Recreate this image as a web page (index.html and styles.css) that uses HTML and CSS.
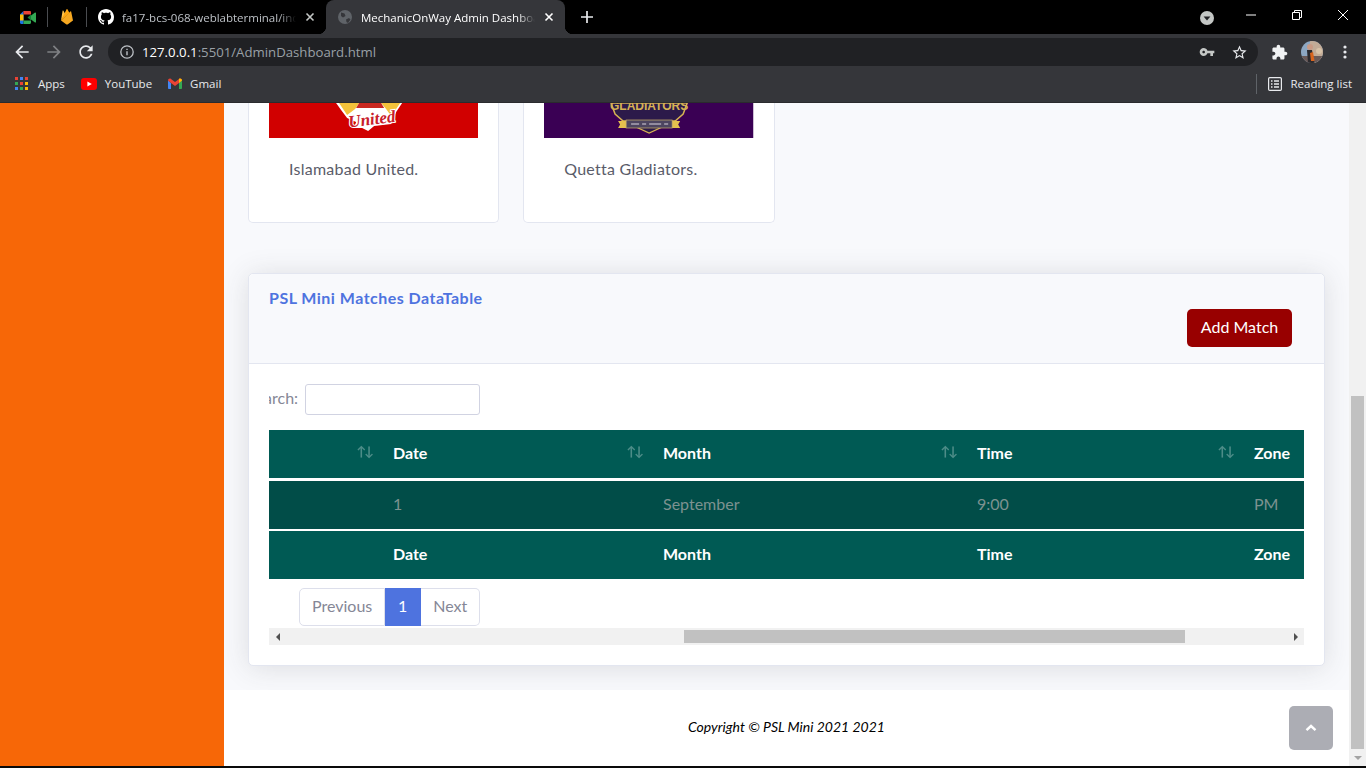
FILE: index.html
```html
<!DOCTYPE html>
<html lang="en">
<head>
    <meta charset="UTF-8">
    <meta name="viewport" content="width=device-width, initial-scale=1.0">
    <title>MechanicOnWay Admin Dashboard</title>
    <link rel="stylesheet" href="styles.css">
</head>
<body>
<div class="browser">

    <!-- tabs -->
    <div class="tabstrip">
        <span class="pinned">
            <svg width="16" height="13" viewBox="0 0 16 13">
                <path d="M0 3.500 3.500 0v13H1.200C.5 13 0 12.500 0 11.800z" fill="#1a73e8"/>
                <path d="M3.500 0h6.300c.7 0 1.200.5 1.200 1.200v2.300H3.500z" fill="#ea4335"/>
                <path d="M3.500 9.500H11v2.300c0 .7-.5 1.200-1.200 1.200H3.500z" fill="#34a853"/>
                <path d="M0 3.500h3.500v6H0z" fill="#fbbc04"/>
                <path d="M7.500 6.500 11 3.500v6z" fill="#188038"/>
                <path d="M11 4.600 15 1.600c.4-.3 1-.1 1 .5v8.800c0 .6-.6.8-1 .5l-4-3z" fill="#34a853"/>
            </svg>
        </span>
        <span class="tab-sep"></span>
        <span class="pinned">
            <svg width="12" height="16" viewBox="0 0 12 16">
                <path d="M0 11.500 1.600 1.800c.1-.4.6-.5.8-.1L4.200 5z" fill="#ffc24a"/>
                <path d="M0 11.500 5.600.3c.2-.4.6-.4.8 0L8.500 4z" fill="#ffa712"/>
                <path d="M0 11.500 9.400 2.500c.3-.3.7-.1.8.3L12 11.500 6.900 15.200c-.5.3-1.300.3-1.800 0z" fill="#f6a821"/>
            </svg>
        </span>
        <span class="tab-sep"></span>
        <div class="tab">
            <svg class="tab-icon" width="16" height="16" viewBox="0 0 16 16"><path fill="#fff" d="M8 0C3.580 0 0 3.580 0 8c0 3.540 2.290 6.530 5.470 7.590.4.07.55-.17.55-.38 0-.19-.01-.82-.01-1.490-2.010.37-2.530-.49-2.690-.94-.09-.23-.48-.94-.82-1.130-.28-.15-.68-.52-.01-.53.63-.01 1.080.58 1.230.82.72 1.210 1.870.87 2.330.66.07-.52.28-.87.51-1.070-1.780-.2-3.640-.89-3.640-3.950 0-.87.31-1.590.82-2.150-.08-.2-.36-1.020.08-2.120 0 0 .67-.21 2.200.82.64-.18 1.320-.27 2-.27.68 0 1.360.09 2 .27 1.530-1.040 2.200-.82 2.200-.82.44 1.100.16 1.920.08 2.120.51.56.82 1.270.82 2.150 0 3.070-1.870 3.750-3.650 3.950.29.25.54.73.54 1.480 0 1.070-.01 1.930-.01 2.200 0 .21.15.46.55.38A8.013 8.013 0 0016 8c0-4.420-3.580-8-8-8z"/></svg>
            <span class="tab-title">fa17-bcs-068-weblabterminal/index.html</span>
            <svg class="tab-close" width="10" height="10" viewBox="0 0 10 10"><path d="M1.500 1.500l7 7m0-7l-7 7" stroke="#c4c7c5" stroke-width="1.600"/></svg>
        </div>
        <div class="tab tab-active">
            <svg class="tab-icon" width="14" height="14" viewBox="0 0 14 14">
                <circle cx="7" cy="7" r="7" fill="#5f6368"/>
                <path d="M3 2.500 6.500 3.500 7.500 6 5 7.500 3 6zM8 9.500l3-1.500 1.500 1.500L10 13 8.500 12z" fill="#35363a"/>
            </svg>
            <span class="tab-title">MechanicOnWay Admin Dashboard</span>
            <svg class="tab-close" width="10" height="10" viewBox="0 0 10 10"><path d="M1.500 1.500l7 7m0-7l-7 7" stroke="#fff" stroke-width="1.600"/></svg>
        </div>
        <svg class="new-tab" width="12" height="12" viewBox="0 0 12 12"><path d="M6 0v12M0 6h12" stroke="#e8eaed" stroke-width="1.700"/></svg>

        <svg class="tab-search" width="14" height="14" viewBox="0 0 14 14">
            <circle cx="7" cy="7" r="7" fill="#c4c7c5"/>
            <path d="M3.600 5.500h6.800L7 9.500z" fill="#202124"/>
        </svg>
        <div class="win-controls">
            <svg width="10" height="10" viewBox="0 0 10 10"><path d="M0 5h10" stroke="#fff"/></svg>
            <svg width="10" height="10" viewBox="0 0 10 10"><path d="M.5 2.500h7v7h-7zM2.500 2.500v-2h7v7h-2" fill="none" stroke="#fff"/></svg>
            <svg width="10" height="10" viewBox="0 0 10 10"><path d="M0 0l10 10M10 0L0 10" stroke="#fff"/></svg>
        </div>
    </div>

    <!-- address bar -->
    <div class="toolbar">
        <svg class="nav-btn" width="20" height="20" viewBox="0 0 24 24"><path fill="#e8eaed" d="M20 11H7.830l5.590-5.590L12 4l-8 8 8 8 1.410-1.410L7.830 13H20v-2z"/></svg>
        <svg class="nav-btn" width="20" height="20" viewBox="0 0 24 24"><path fill="#7f8184" d="M12 4l-1.410 1.410L16.170 11H4v2h12.170l-5.580 5.590L12 20l8-8z"/></svg>
        <svg class="nav-btn" width="20" height="20" viewBox="0 0 24 24"><path fill="#e8eaed" d="M17.650 6.350C16.200 4.900 14.210 4 12 4c-4.420 0-7.990 3.580-7.990 8s3.570 8 7.990 8c3.730 0 6.840-2.550 7.730-6h-2.080c-.82 2.330-3.040 4-5.650 4-3.310 0-6-2.690-6-6s2.690-6 6-6c1.660 0 3.140.69 4.220 1.780L13 11h7V4l-2.350 2.350z"/></svg>
        <div class="omnibox">
            <svg width="14" height="14" viewBox="0 0 14 14">
                <circle cx="7" cy="7" r="6.200" fill="none" stroke="#bdc1c6" stroke-width="1.300"/>
                <path d="M7 6.200v4M7 3.800v1.300" stroke="#bdc1c6" stroke-width="1.400"/>
            </svg>
            <span class="url"><b>127.0.0.1</b>:5501/AdminDashboard.html</span>
            <svg class="omni-key" width="16" height="16" viewBox="0 0 24 24"><path fill="#c4c7c5" d="M12.650 10C11.830 7.670 9.610 6 7 6c-3.310 0-6 2.690-6 6s2.690 6 6 6c2.610 0 4.830-1.670 5.650-4H17v4h4v-4h2v-4H12.650zM7 14c-1.100 0-2-.9-2-2s.9-2 2-2 2 .9 2 2-.9 2-2 2z"/></svg>
            <svg class="omni-star" width="17" height="17" viewBox="0 0 24 24"><path fill="#e8eaed" d="M22 9.240l-7.190-.62L12 2 9.190 8.630 2 9.240l5.460 4.730L5.820 21 12 17.270 18.180 21l-1.630-7.030L22 9.240zM12 15.400l-3.760 2.270 1-4.280-3.320-2.880 4.380-.38L12 6.100l1.710 4.040 4.380.38-3.320 2.880 1 4.280L12 15.400z"/></svg>
        </div>
        <svg class="ext-icon" width="17" height="17" viewBox="0 0 24 24"><path fill="#f1f3f4" d="M20.500 11H19V7c0-1.100-.9-2-2-2h-4V3.500C13 2.120 11.880 1 10.500 1S8 2.120 8 3.500V5H4c-1.100 0-1.990.9-1.990 2v3.800H3.500c1.490 0 2.700 1.210 2.700 2.700s-1.210 2.700-2.700 2.700H2V20c0 1.100.9 2 2 2h3.800v-1.500c0-1.490 1.210-2.700 2.700-2.700 1.490 0 2.700 1.210 2.700 2.700V22H17c1.100 0 2-.9 2-2v-4h1.500c1.380 0 2.500-1.120 2.500-2.500S21.880 11 20.500 11z"/></svg>
        <svg class="avatar" width="22" height="22" viewBox="0 0 22 22">
            <defs><clipPath id="avatar-clip"><circle cx="11" cy="11" r="11"/></clipPath></defs>
            <g clip-path="url(#avatar-clip)">
                <rect width="22" height="22" fill="#8da7c2"/>
                <rect x="9" width="13" height="22" fill="#c2ab96"/>
                <rect y="15" width="22" height="7" fill="#6a5a58"/>
                <circle cx="9" cy="6" r="3" fill="#c99a84"/>
                <path d="M6 9h5l2.500 13H7z" fill="#2b2a2e"/>
                <path d="M9 12l3-1 1.500 9H10z" fill="#d8641e"/>
                <circle cx="18" cy="10" r="3" fill="#d8c3a8"/>
            </g>
        </svg>
        <svg class="menu-dots" width="4" height="14" viewBox="0 0 4 14"><circle cx="2" cy="2" r="1.600" fill="#e8eaed"/><circle cx="2" cy="7" r="1.600" fill="#e8eaed"/><circle cx="2" cy="12" r="1.600" fill="#e8eaed"/></svg>
    </div>

    <!-- bookmarks -->
    <div class="bookmarks">
        <span class="bookmark">
            <svg width="13" height="13" viewBox="0 0 13 13">
                <rect width="3" height="3" fill="#ea4335"/><rect x="5" width="3" height="3" fill="#4285f4"/><rect x="10" width="3" height="3" fill="#ea4335"/>
                <rect y="5" width="3" height="3" fill="#34a853"/><rect x="5" y="5" width="3" height="3" fill="#ea4335"/><rect x="10" y="5" width="3" height="3" fill="#fbbc04"/>
                <rect y="10" width="3" height="3" fill="#4285f4"/><rect x="5" y="10" width="3" height="3" fill="#34a853"/><rect x="10" y="10" width="3" height="3" fill="#fbbc04"/>
            </svg>
            <span class="label-apps">Apps</span>
        </span>
        <span class="bookmark">
            <svg width="16" height="12" viewBox="0 0 16 12"><rect width="16" height="12" rx="3" fill="#f00"/><path d="M6.400 3.400v5.200L10.800 6z" fill="#fff"/></svg>
            YouTube
        </span>
        <span class="bookmark">
            <svg width="14" height="11" viewBox="0 0 14 11">
                <path d="M0 2.500v7.500c0 .5.400 1 1 1h2V5z" fill="#4285f4"/>
                <path d="M11 5v6h2c.6 0 1-.5 1-1V2.500z" fill="#34a853"/>
                <path d="M0 2.500C0 .8 1.800 0 3 .9L7 4l4-3.100c1.200-.9 3-.1 3 1.600L11 5 7 8 3 5z" fill="#ea4335"/>
                <path d="M11 .9C12.200 0 14 .8 14 2.500L11 5z" fill="#fbbc04"/>
            </svg>
            Gmail
        </span>
        <span class="bookmark-sep"></span>
        <span class="bookmark reading-list">
            <svg width="14" height="14" viewBox="0 0 14 14">
                <rect x=".6" y=".6" width="12.800" height="12.800" rx="1.200" fill="none" stroke="#e8eaed" stroke-width="1.200"/>
                <path d="M3 4h1.500M3 7h1.500M3 10h1.500M6 4h5M6 7h5M6 10h5" stroke="#e8eaed" stroke-width="1.300"/>
            </svg>
            Reading list
        </span>
    </div>

    <!-- page -->
    <div class="viewport">
        <aside class="sidebar"></aside>

        <main class="content">
            <div class="team-row">
                <div class="team-card">
                    <svg class="team-img" viewBox="0 0 209 35" preserveAspectRatio="none">
                        <rect width="209" height="35" fill="#d10000"/>
                        <path d="M67 0h66l-6 9-3 7-2 5-17 2-6 5-6-3-8 0 2-6-9-4-6-8z" fill="#fff"/>
                        <path d="M70 0h20l-4 6-8 6zM112 0h19l-6 9-3 4-5-7z" fill="#f3c23a"/>
                        <path d="M90 0h22l3 5H87z" fill="#c9281f"/>
                        <text x="79" y="22" class="logo-script" transform="rotate(-7 100 16)">United</text>
                    </svg>
                    <p class="team-name">Islamabad United.</p>
                </div>
                <div class="team-card">
                    <svg class="team-img" viewBox="0 0 209 35" preserveAspectRatio="none">
                        <rect width="209" height="35" fill="#3a0054"/>
                        <path d="M67 0h76l-4 11-8 7H79l-8-7z" fill="#2c1a4a" stroke="#d6b254" stroke-width="1.500"/>
                        <text x="105" y="7" class="logo-caps" text-anchor="middle">GLADIATORS</text>
                        <path d="M79 18l26 12 26-12" fill="#2c1a4a" stroke="#d6b254" stroke-width="1.200"/>
                        <path d="M74 18h9v7h-9l2-3.500zM136 18h-9v7h9l-2-3.500z" fill="#e5c04e"/>
                        <rect x="82" y="17" width="46" height="8" fill="#4d4560" stroke="#c9b06a" stroke-width=".7"/>
                        <path d="M87 21h8M98 21h4M105 21h12M120 21h4" stroke="#d9d4dd" stroke-width="1"/>
                    </svg>
                    <p class="team-name">Quetta Gladiators.</p>
                </div>
            </div>

            <section class="table-card">
                <header class="table-head">
                    <h6>PSL Mini Matches DataTable</h6>
                    <button class="btn-add">Add Match</button>
                </header>
                <div class="table-body">
                    <div class="table-clip">
                        <div class="table-scroll">
                            <label class="table-filter">Search: <input type="search"></label>
                            <table class="match-table">
                                <colgroup>
                                    <col class="col-team"><col class="col-date"><col class="col-month"><col class="col-time"><col class="col-zone">
                                </colgroup>
                                <thead>
                                    <tr>
                                        <th class="sortable"></th>
                                        <th class="sortable">Date</th>
                                        <th class="sortable">Month</th>
                                        <th class="sortable">Time</th>
                                        <th>Zone</th>
                                    </tr>
                                </thead>
                                <tbody>
                                    <tr>
                                        <td></td><td>1</td><td>September</td><td>9:00</td><td>PM</td>
                                    </tr>
                                </tbody>
                                <tfoot>
                                    <tr>
                                        <th></th><th>Date</th><th>Month</th><th>Time</th><th>Zone</th>
                                    </tr>
                                </tfoot>
                            </table>
                            <div class="pager">
                                <a class="page-link">Previous</a>
                                <a class="page-link page-current">1</a>
                                <a class="page-link">Next</a>
                            </div>
                        </div>
                    </div>
                    <div class="hscroll">
                        <span class="arrow-left"></span>
                        <span class="hscroll-track"><span class="hscroll-thumb"></span></span>
                        <span class="arrow-right"></span>
                    </div>
                </div>
            </section>

            <footer class="page-footer">
                <em>Copyright &copy; PSL Mini 2021 2021</em>
            </footer>

            <a class="scroll-top">
                <svg width="12" height="8" viewBox="0 0 12 8"><path d="M1.500 6.200 6 2l4.500 4.200" fill="none" stroke="#fff" stroke-width="2.400"/></svg>
            </a>
        </main>

        <div class="vscroll">
            <span class="arrow-up"></span>
            <span class="vscroll-track"><span class="vscroll-thumb"></span></span>
            <span class="arrow-down"></span>
        </div>
    </div>

    <div class="taskbar"></div>
</div>
</body>
</html>
```

FILE: styles.css
```css
* {
    box-sizing: border-box;
}
html, body {
    margin: 0;
    height: 100%;
    overflow: hidden;
}
body {
    font-family: Lato, "Open Sans", sans-serif;
    font-size: 16px;
    color: #858796;
    background-color: #000;
}
.browser {
    display: flex;
    flex-direction: column;
    height: 768px;
}

/* tabs */
.tabstrip {
    display: flex;
    align-items: center;
    height: 34px;
    background-color: #000;
    padding-left: 20px;
    font-family: "Open Sans", sans-serif;
    font-size: 11.500px;
    color: #bdc1c6;
    flex: none;
}
.pinned {
    display: flex;
    align-items: center;
    justify-content: center;
    width: 16px;
}
.tab-sep {
    width: 1px;
    height: 20px;
    background-color: #4a4c50;
    margin: 0 11px;
}
.tab {
    display: flex;
    align-items: center;
    height: 34px;
    position: relative;
}
.tab-icon {
    flex: none;
}
.tab-title {
    width: 174px;
    margin-left: 8px;
    white-space: nowrap;
    overflow: hidden;
    -webkit-mask-image: linear-gradient(to right, #000 90%, transparent);
    mask-image: linear-gradient(to right, #000 90%, transparent);
}
.tab-close {
    margin: 0 11px 0 9px;
    flex: none;
}
.tab-active {
    width: 239px;
    padding-left: 12px;
    background-color: #35363a;
    border-radius: 8px 8px 0 0;
    color: #fff;
}
.tab-active::before,
.tab-active::after {
    content: "";
    position: absolute;
    bottom: 0;
    width: 8px;
    height: 8px;
}
.tab-active::before {
    left: -8px;
    background: radial-gradient(circle at 0 0, transparent 8px, #35363a 8.500px);
}
.tab-active::after {
    right: -8px;
    background: radial-gradient(circle at 100% 0, transparent 8px, #35363a 8.500px);
}
.tab-active .tab-title {
    margin-left: 9px;
}
.new-tab {
    margin-left: 16px;
    flex: none;
}
.tab-search {
    margin-left: auto;
    margin-top: 1px;
}
.win-controls {
    display: flex;
    gap: 36px;
    margin: -4px 18px 0 32px;
}

/* address bar */
.toolbar {
    display: flex;
    align-items: center;
    height: 35px;
    padding: 1px 0 0 12px;
    background-color: #35363a;
    flex: none;
}
.nav-btn {
    margin-right: 12px;
    flex: none;
}
.omnibox {
    display: flex;
    align-items: center;
    width: 1150px;
    height: 28px;
    padding: 0 10px 0 12px;
    background-color: #202124;
    border-radius: 14px;
    font-family: "Open Sans", sans-serif;
    font-size: 13.200px;
    color: #9aa0a6;
}
.url {
    margin-left: 8px;
}
.url b {
    font-weight: 400;
    color: #fff;
}
.omni-key {
    margin-left: auto;
}
.omni-star {
    margin-left: 16px;
}
.ext-icon {
    margin-left: 13px;
}
.avatar {
    margin-left: 13px;
}
.menu-dots {
    margin-left: 20px;
}

/* bookmarks */
.bookmarks {
    display: flex;
    align-items: center;
    height: 34px;
    padding: 0 0 4px 15px;
    background-color: #35363a;
    border-bottom: 1px solid #2a2b2e;
    font-family: "Open Sans", sans-serif;
    font-size: 11.500px;
    color: #e8eaed;
    flex: none;
}
.bookmark {
    display: flex;
    align-items: center;
    gap: 8px;
    margin-right: 16px;
}
.label-apps {
    margin-left: 2px;
}
.bookmark-sep {
    width: 1px;
    height: 20px;
    margin-left: auto;
    background-color: #5f6368;
}
.reading-list {
    margin: 0 14px 0 11px;
}

/* page */
.viewport {
    display: flex;
    flex: 1;
    min-height: 0;
}
.sidebar {
    width: 224px;
    background-color: #f76707;
    flex: none;
}
.content {
    position: relative;
    display: flex;
    flex-direction: column;
    flex: 1;
    min-width: 0;
    background-color: #f8f9fc;
    overflow: hidden;
}
.team-row {
    display: grid;
    grid-template-columns: repeat(4, 1fr);
    gap: 24px;
    padding: 0 24px;
}
.team-card {
    height: 120px;
    background-color: #fff;
    border: 1px solid #e3e6f0;
    border-top: none;
    border-radius: 0 0 5px 5px;
    padding: 0 20px;
}
.team-img {
    display: block;
    width: 100%;
    height: 35px;
}
.logo-script {
    font-family: "Liberation Serif", serif;
    font-style: italic;
    font-weight: 700;
    font-size: 17px;
    fill: #c8202a;
    stroke: #fff;
    stroke-width: 2px;
    paint-order: stroke;
}
.logo-caps {
    font-family: "Liberation Sans", sans-serif;
    font-weight: 700;
    font-size: 12px;
    fill: #d6b254;
}
.team-name {
    margin: 19px 0 0 20px;
    line-height: 24px;
    letter-spacing: .25px;
    color: #5a5c69;
}
.table-card {
    margin: 50px 24px 24px;
    background-color: #fff;
    border: 1px solid #e3e6f0;
    border-radius: 5px;
    box-shadow: 0 2px 28px rgba(58, 59, 69, 0.15);
}
.table-head {
    display: flex;
    flex-direction: column;
    height: 90px;
    padding: 14px 32px 0 20px;
    background-color: #f8f9fc;
    border-bottom: 1px solid #e3e6f0;
    border-radius: 5px 5px 0 0;
}
.table-head h6 {
    margin: 0;
    font-size: 16px;
    line-height: 20px;
    font-weight: 700;
    letter-spacing: .48px;
    color: #4e73df;
}
.btn-add {
    align-self: flex-end;
    width: 105px;
    height: 38px;
    margin-top: 1px;
    padding: 0 0 3px;
    border: none;
    border-radius: 5px;
    background-color: #980000;
    color: #fff;
    font-family: inherit;
    font-size: 16px;
}
.table-body {
    padding: 20px;
}
.table-clip {
    overflow: hidden;
}
.table-scroll {
    width: 1220px;
    margin-left: -20px;
}
.table-filter {
    display: flex;
    align-items: center;
    gap: 7px;
    height: 31px;
    margin-left: -2px;
    padding-bottom: 5px;
    white-space: nowrap;
}
.table-filter input {
    flex: none;
    width: 175px;
    height: 31px;
    margin-bottom: -5px;
    border: 1px solid #d1d3e2;
    border-radius: 3px;
    background-color: #fff;
}
.match-table {
    width: 1191px;
    margin-top: 15px;
    table-layout: fixed;
    border-collapse: separate;
    border-spacing: 0;
    color: #fff;
}
.col-team {
    width: 130px;
}
.col-date {
    width: 270px;
}
.col-month {
    width: 314px;
}
.col-time {
    width: 277px;
}
.col-zone {
    width: 200px;
}
.match-table th,
.match-table td {
    height: 48px;
    padding: 0 14px 4px;
    text-align: left;
    background-color: #005a54;
}
.match-table td {
    height: 53px;
    background-color: #014d48;
    background-clip: padding-box;
    color: #7d9290;
    border-top: 3px solid #fff;
    border-bottom: 2px solid #fff;
}
.sortable {
    position: relative;
}
.sortable::after {
    content: "↑↓";
    position: absolute;
    right: 7px;
    top: 13px;
    font-size: 13px;
    line-height: 16px;
    font-weight: 700;
    letter-spacing: -2px;
    opacity: .3;
}
.pager {
    display: flex;
    margin: 9px 0 2px 50px;
    height: 38px;
    line-height: 33px;
}
.page-link {
    padding: 0 12px;
    border: 1px solid #dddfeb;
    border-left: none;
    background-color: #fff;
    color: #858796;
}
.page-link:first-child {
    border-left: 1px solid #dddfeb;
    border-radius: 5px 0 0 5px;
}
.page-link:last-child {
    border-radius: 0 5px 5px 0;
}
.page-current {
    width: 36px;
    padding: 0;
    text-align: center;
    background-color: #4e73df;
    border-color: #4e73df;
    color: #fff;
}
.hscroll {
    display: flex;
    align-items: center;
    height: 17px;
    background-color: #f1f1f1;
}
.hscroll-track {
    flex: 1;
    padding-left: 398px;
}
.hscroll-thumb {
    display: block;
    width: 501px;
    height: 13px;
    background-color: #c1c1c1;
}
.arrow-left,
.arrow-right {
    width: 17px;
    display: flex;
    justify-content: center;
}
.arrow-left::before {
    content: "";
    border: 4px solid transparent;
    border-left: none;
    border-right: 4px solid #505050;
}
.arrow-right::before {
    content: "";
    border: 4px solid transparent;
    border-right: none;
    border-left: 4px solid #505050;
}
.page-footer {
    display: flex;
    align-items: center;
    justify-content: center;
    flex: 1;
    padding-bottom: 3px;
    background-color: #fff;
    font-size: 14px;
    color: #000;
}
.scroll-top {
    position: absolute;
    right: 16px;
    bottom: 16px;
    display: flex;
    align-items: center;
    justify-content: center;
    width: 44px;
    height: 44px;
    border-radius: 5px;
    background-color: rgba(90, 92, 105, 0.5);
}

/* page scrollbar */
.vscroll {
    display: flex;
    flex-direction: column;
    width: 17px;
    background-color: #f1f1f1;
    flex: none;
}
.arrow-up,
.arrow-down {
    height: 17px;
    display: flex;
    align-items: center;
    justify-content: center;
    flex: none;
}
.arrow-down::before {
    content: "";
    border: 4px solid transparent;
    border-bottom: none;
    border-top: 4px solid #a3a3a3;
}
.vscroll-track {
    flex: 1;
    padding: 276px 2px 0;
}
.vscroll-thumb {
    display: block;
    height: 353px;
    background-color: #c1c1c1;
}
.taskbar {
    height: 2px;
    background-color: #0a0a0a;
    flex: none;
}
```
